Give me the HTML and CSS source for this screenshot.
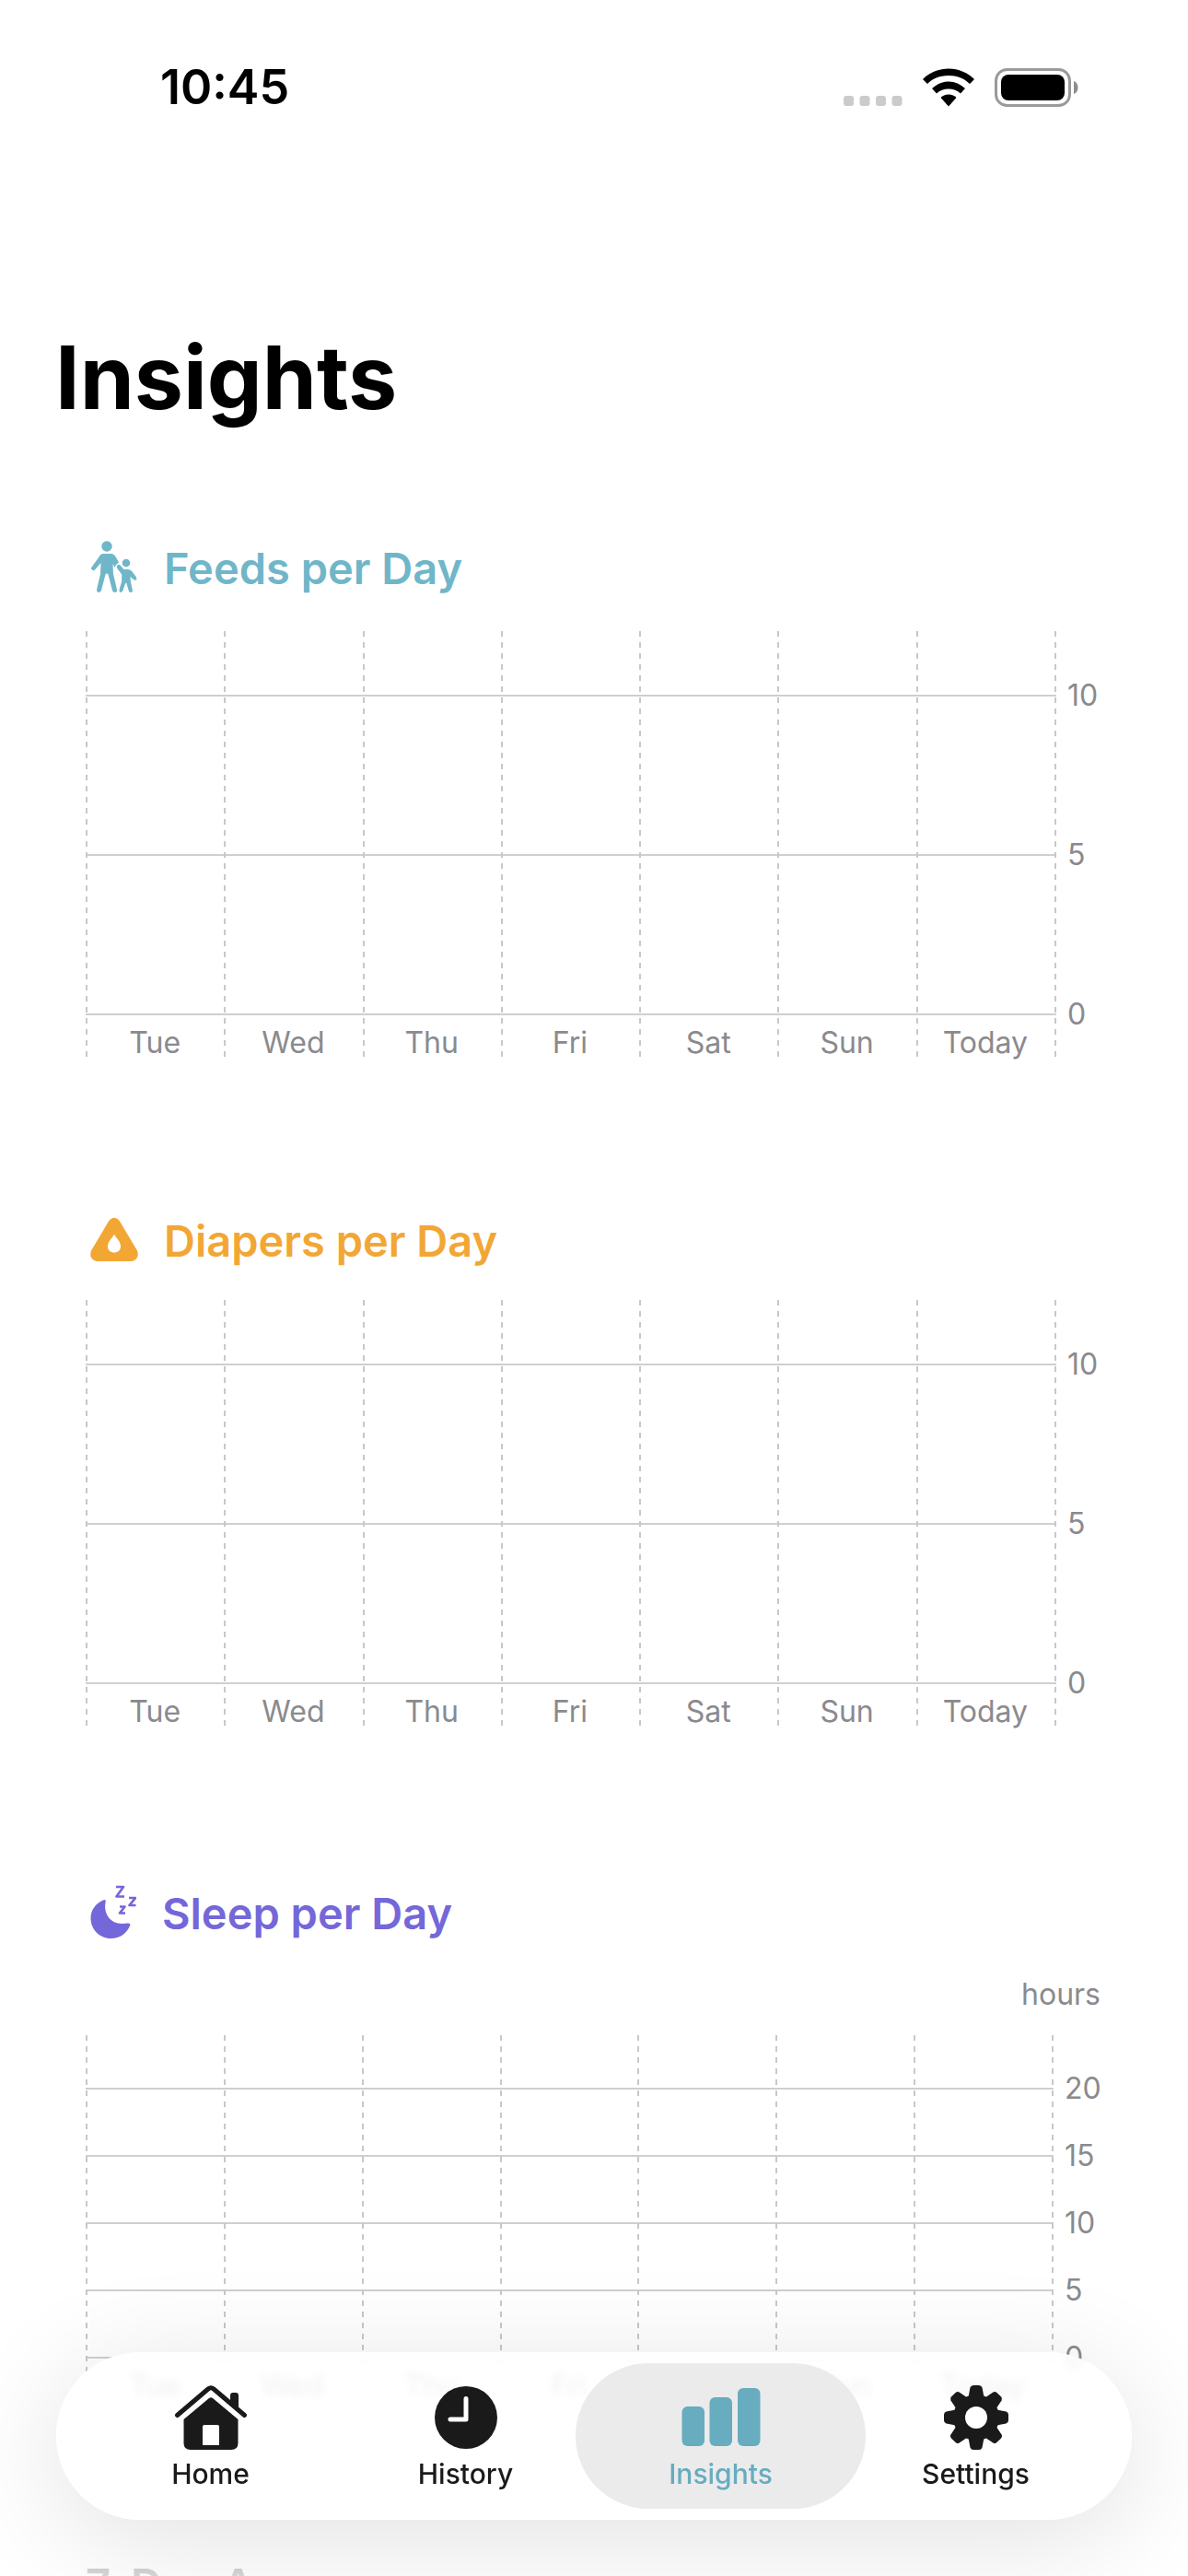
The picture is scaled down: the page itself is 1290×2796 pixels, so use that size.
FILE: index.html
```html
<!DOCTYPE html>
<html lang="en">
<head>
    <meta charset="UTF-8">
    <meta name="viewport" content="width=device-width, initial-scale=1.0">
    <title>Insights</title>
    <link rel="stylesheet" href="styles.css">
</head>
<body>
    <div class="screen">
        <header class="status-bar">
            <span class="time">10:45</span>
            <div class="status-icons">
                <svg class="signal" width="64" height="12" viewBox="0 0 64 12" fill="#cbcbcb">
                    <rect x="0" y="0" width="11" height="11" rx="3"/>
                    <rect x="17.5" y="0" width="11" height="11" rx="3"/>
                    <rect x="35" y="0" width="11" height="11" rx="3"/>
                    <rect x="52.5" y="0" width="11" height="11" rx="3"/>
                </svg>
                <svg width="58" height="42" viewBox="0 0 58 42">
                    <path d="M29 0.5C40 0.5 50 5 57 12L52 17C46 11 38 8 29 8S12 11 6 17L1 12C8 5 18 0.5 29 0.5Z"/>
                    <path d="M29 14.5C36 14.5 42 17.500 47 22L42 27.500C38.500 24 34 22.500 29 22.500S19.500 24 16 27.500L11 22C16 17.500 22 14.500 29 14.500Z"/>
                    <path d="M29 28.500C32.500 28.500 35.500 30 37.500 32L29 41.500L20.500 32C22.500 30 25.500 28.500 29 28.500Z"/>
                </svg>
                <svg width="92" height="42" viewBox="0 0 92 42">
                    <rect x="1.500" y="1.500" width="80" height="39" rx="12" fill="none" stroke="#9a9a9a" stroke-width="3"/>
                    <rect x="7" y="7" width="69" height="28" rx="8"/>
                    <path d="M86 14C92 16 92 26 86 28Z" fill="#8c8c8c"/>
                </svg>
            </div>
        </header>

        <main class="content">
            <h1>Insights</h1>

            <section class="card feeds">
                <h2>
                    <svg width="52" height="60" viewBox="0 0 52 60" fill="currentColor">
                        <circle cx="18" cy="7" r="5.700"/>
                        <circle cx="39" cy="25" r="4.300"/>
                        <path d="M14 15H22C25 15 26.500 16.500 28 19L31 24.500L28 27L26.500 30L24.500 26L25 37L29 54Q29.400 57 27 57T24 55L19.500 37.500Q18 35.500 16.500 37.500L12 55Q11 57 9 57T7 54L11 37L11.500 25L5.500 32Q4 34 2 32.500T2 29L9.500 18.500Q11 15 14 15Z"/>
                        <path d="M29.500 27.500Q31 26 33 28L36.500 32H41Q44 32 46 35L50 40.500Q51 43 49.500 43.500T47 43L43.500 40L43.800 45L46 55Q46 57 44.300 57T42 56L39.500 47.500Q38.700 46 38 47.500L35.500 55Q34.500 57 33 57T31.500 54L34.200 45V37.500L30 32Q28 29 29.500 27.500Z"/>
                    </svg>
                    Feeds per Day
                </h2>
                <div class="chart">
                    <div class="plot">
                        <div class="columns">
                            <span>Tue</span><span>Wed</span><span>Thu</span><span>Fri</span><span>Sat</span><span>Sun</span><span>Today</span>
                        </div>
                    </div>
                    <div class="axis"><span>10</span><span>5</span><span>0</span></div>
                </div>
            </section>

            <section class="card diapers">
                <h2>
                    <svg width="52" height="60" viewBox="0 0 52 60" fill="currentColor">
                        <path fill-rule="evenodd" d="M20 9.500Q26 2 32 9.500L51 41.500Q54 51 45 53H7Q-2 51 1 41.500ZM26 23.500C24 28 19 31 19 37C19 41 22 43.500 26 43.500S33 41 33 37C33 31 28 28 26 23.500Z"/>
                    </svg>
                    Diapers per Day
                </h2>
                <div class="chart">
                    <div class="plot">
                        <div class="columns">
                            <span>Tue</span><span>Wed</span><span>Thu</span><span>Fri</span><span>Sat</span><span>Sun</span><span>Today</span>
                        </div>
                    </div>
                    <div class="axis"><span>10</span><span>5</span><span>0</span></div>
                </div>
            </section>

            <section class="card sleep">
                <h2>
                    <svg width="50" height="60" viewBox="0 0 50 60" fill="currentColor">
                        <path d="M14 16.500Q17.500 14.500 16.500 19C14 33 24 44.500 40 41.500Q44.500 41 43 44.500C39 53 32 58 22.500 58C10 58 0.500 48 0.500 36C0.500 27 6 20 14 16.500Z"/>
                        <path d="M28 2H36L28.500 12.500H37M42 14H49L42.500 22H49.500M32 23.500H37.500L32 30.500H38" fill="none" stroke="currentColor" stroke-width="2.700" stroke-linejoin="round"/>
                    </svg>
                    Sleep per Day
                </h2>
                <p class="unit">hours</p>
                <div class="chart">
                    <div class="plot">
                        <div class="columns">
                            <span>Tue</span><span>Wed</span><span>Thu</span><span>Fri</span><span>Sat</span><span>Sun</span><span>Today</span>
                        </div>
                    </div>
                    <div class="axis"><span>20</span><span>15</span><span>10</span><span>5</span><span>0</span></div>
                </div>
            </section>

            <section class="card averages">
                <h2>7-Day Averages</h2>
            </section>
        </main>

        <div class="bottom-fade"></div>

        <nav class="tab-bar">
            <a href="#home" class="tab">
                <svg width="80" height="72" viewBox="0 0 80 72" fill="currentColor">
                    <path d="M3.500 33.500L37 5Q40 2.500 43 5L76.500 33.500" fill="none" stroke="currentColor" stroke-width="5" stroke-linecap="round"/>
                    <path d="M61 20V12Q61 9 64 9H67Q70 9 70 12V29Z"/>
                    <path fill-rule="evenodd" d="M38 15Q40 13.500 42 15L69.500 38V64Q69.500 71 62 71H18Q10.500 71 10.500 64V38ZM33 44Q31 44 31 46V66H49V46Q49 44 47 44Z"/>
                </svg>
                Home
            </a>
            <a href="#history" class="tab">
                <svg width="80" height="72" viewBox="0 0 80 72">
                    <circle cx="40" cy="36" r="34" fill="currentColor"/>
                    <path d="M40 15.500V38H23" fill="none" stroke="#fff" stroke-width="5" stroke-linecap="round" stroke-linejoin="round"/>
                </svg>
                History
            </a>
            <a href="#insights" class="tab active">
                <svg width="88" height="72" viewBox="0 0 88 72" fill="currentColor">
                    <rect x="1.500" y="24" width="24.500" height="43" rx="6"/>
                    <rect x="31.500" y="14" width="24.500" height="53" rx="6"/>
                    <rect x="62" y="4" width="24.500" height="63" rx="6"/>
                </svg>
                Insights
            </a>
            <a href="#settings" class="tab">
                <svg width="80" height="72" viewBox="0 0 80 72">
                    <g fill="currentColor">
                        <path id="tooth" d="M31.500 14L33.500 3.500Q34.200 1 37 1H43Q45.800 1 46.500 3.500L48.500 14V36H31.500Z"/>
                        <use href="#tooth" transform="rotate(45 40 36)"/>
                        <use href="#tooth" transform="rotate(90 40 36)"/>
                        <use href="#tooth" transform="rotate(135 40 36)"/>
                        <use href="#tooth" transform="rotate(180 40 36)"/>
                        <use href="#tooth" transform="rotate(225 40 36)"/>
                        <use href="#tooth" transform="rotate(270 40 36)"/>
                        <use href="#tooth" transform="rotate(315 40 36)"/>
                        <circle cx="40" cy="36" r="25"/>
                    </g>
                    <circle cx="40" cy="36" r="12" fill="#fff"/>
                </svg>
                Settings
            </a>
        </nav>
    </div>
</body>
</html>
```
FILE: styles.css
```css
* {
    margin: 0;
    padding: 0;
    box-sizing: border-box;
}

body {
    font-family: Inter, "Liberation Sans", sans-serif;
    background: #fff;
    color: #000;
}

.screen {
    position: relative;
    height: 100vh;
    overflow: hidden;
    display: flex;
    flex-direction: column;
}

.status-bar {
    flex: none;
    display: flex;
    justify-content: space-between;
    align-items: center;
    height: 190px;
    padding: 0 118px 0 174px;
}

.time {
    font-size: 52px;
    line-height: 60px;
    font-weight: 600;
}

.status-icons {
    display: flex;
    align-items: flex-end;
    gap: 21px;
}

.content {
    flex: 1;
    min-height: 0;
    padding: 158px 60px 0;
    overflow: hidden;
}

h1 {
    font-size: 95px;
    line-height: 124px;
    font-weight: 700;
}

.card {
    padding: 0 35px 0 33px;
    margin-bottom: 166px;
}

h1 + .card {
    margin-top: 108px;
}

.card h2 {
    display: flex;
    align-items: center;
    gap: 28px;
    height: 72px;
    padding-left: 5px;
    margin-bottom: 33px;
    font-size: 47px;
    font-weight: 600;
}

.feeds h2 {
    color: #70b6c9;
}

.diapers h2 {
    height: 64px;
    color: #f2a735;
}

.sleep h2 {
    color: #7467d9;
}

.averages h2 {
    height: 64px;
    padding-left: 0;
}

.unit {
    margin-bottom: 24px;
    text-align: right;
    font-size: 32px;
    line-height: 40px;
    color: #8a8a8e;
}

.chart {
    --step: 173px;
    --top: 69px;
    --axis: 48px;
    display: flex;
    font-size: 32px;
    line-height: 40px;
    color: #8a8a8e;
}

.sleep .chart {
    --step: 73px;
    --top: 57px;
    --axis: 51px;
}

/* horizontal grid lines, one per axis step */
.plot {
    flex: 1;
    background: repeating-linear-gradient(#cfcfcf 0 2px, transparent 2px var(--step)) 0 var(--top) / 100% 348px no-repeat;
}

.sleep .plot {
    background-size: 100% 294px;
}

/* dashed day separators */
.columns {
    display: grid;
    grid-template-columns: repeat(7, 1fr);
    height: 463px;
    border-right: 2px solid transparent;
    background: repeating-linear-gradient(#c8c8c8 0 6px, transparent 6px 12px) right / 2px 100% no-repeat border-box;
}

.sleep .columns {
    height: 397px;
}

.columns span {
    display: flex;
    align-items: flex-end;
    justify-content: center;
    line-height: 32px;
    background: repeating-linear-gradient(#c8c8c8 0 6px, transparent 6px 12px) left / 2px 100% no-repeat;
}

.axis {
    flex: none;
    width: var(--axis);
    padding: calc(var(--top) - 19px) 0 0 12px;
}

.axis span {
    display: block;
    height: var(--step);
}

.axis span:last-child {
    height: 40px;
}

.bottom-fade {
    position: absolute;
    inset: auto 0 0;
    height: 240px;
    background: linear-gradient(rgba(255, 255, 255, 0), rgba(255, 255, 255, 0.85));
}

.tab-bar {
    position: absolute;
    inset: auto 61px 61px;
    display: grid;
    grid-template-columns: repeat(4, minmax(0, 1fr));
    padding: 12px 31px 12px 29px;
    border-radius: 91px;
    background: rgba(255, 255, 255, 0.86);
    backdrop-filter: blur(4px);
    box-shadow: 0 20px 120px rgba(0, 0, 0, 0.12);
}

.tab {
    display: flex;
    flex-direction: column;
    align-items: center;
    gap: 5px;
    height: 158px;
    margin: 0 -19px;
    padding-top: 23px;
    border-radius: 79px;
    font-size: 30px;
    line-height: 40px;
    font-weight: 500;
    color: #1a1a1a;
    text-decoration: none;
}

.tab.active {
    background: #ebebeb;
    color: #67acbf;
}
```
